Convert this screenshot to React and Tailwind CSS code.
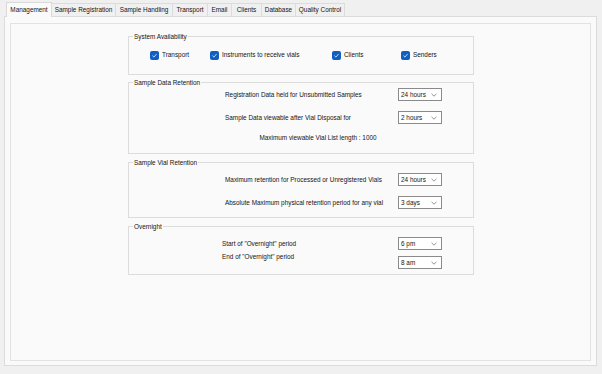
import React from "react";

const tabs = [
  ["Management", 46],
  ["Sample Registration", 64],
  ["Sample Handling", 57],
  ["Transport", 35],
  ["Email", 24],
  ["Clients", 30],
  ["Database", 34],
  ["Quality Control", 49],
];

function Check() {
  return (
    <span className="w-[9px] h-[9px] rounded-[2px] bg-[#0f5fc2] flex items-center justify-center">
      <svg width="7" height="7" viewBox="0 0 10 10">
        <path d="M2 5.2 L4.2 7.3 L8 2.8" fill="none" stroke="#dbe8f8" strokeWidth="1.2" />
      </svg>
    </span>
  );
}

function Select({ value }) {
  return (
    <div className="w-[44px] h-[13px] bg-white border border-[#8a8a8a] flex items-center justify-between pl-[2px] pr-[4px]">
      <span>{value}</span>
      <svg width="6" height="4" viewBox="0 0 6 4">
        <path d="M0.5 0.8 L3 3.2 L5.5 0.8" fill="none" stroke="#7a7a7a" strokeWidth="0.8" />
      </svg>
    </div>
  );
}

function Group({ title, h, mt, children }) {
  return (
    <div className={`relative border border-[#dcdcdc] ${h} ${mt}`}>
      <span className="absolute left-[4px] -top-[5px] bg-[#fafafa] px-[1px] leading-[9px]">{title}</span>
      {children}
    </div>
  );
}

function Row({ label, value, h, indent = "pl-[96px]" }) {
  return (
    <div className={`flex items-center ${h} ${indent}`}>
      <span className="flex-1">{label}</span>
      <div className="w-[75px]">
        <Select value={value} />
      </div>
    </div>
  );
}

export default function App() {
  return (
    <div className="w-[602px] h-[374px] bg-[#f0f0f0] text-[#141414] text-[6.4px] font-['Liberation_Sans',Arial,sans-serif] flex flex-col">
      <div className="flex items-end h-[16px] pl-[6px]">
        {tabs.map(([t, w], i) =>
          i === 0 ? (
            <div
              key={t}
              className="h-[15px] bg-[#fafafa] border border-b-0 border-[#d9d9d9] flex items-center justify-center relative top-[1px]"
              style={{ width: w }}
            >
              {t}
            </div>
          ) : (
            <div
              key={t}
              className="h-[13px] border-r border-t border-[#dcdcdc] flex items-center justify-center"
              style={{ width: w }}
            >
              {t}
            </div>
          )
        )}
      </div>
      <div className="mx-[4px] w-[593px] h-[350px] bg-[#fafafa] border border-[#dcdcdc] pt-[6px] px-[5px]">
        <div className="h-[338px] border border-[#e2e2e2] pl-[117px] pt-[12px]">
          <div className="w-[346px] flex flex-col">
            <Group title="System Availability" h="h-[39px]" mt="mt-0">
              <div className="flex items-center h-[36px] pl-[21px]">
                <Check />
                <span className="ml-[3px] w-[48px]">Transport</span>
                <Check />
                <span className="ml-[3px] w-[110px]">Instruments to receive vials</span>
                <Check />
                <span className="ml-[3px] w-[57px]">Clients</span>
                <Check />
                <span className="ml-[3px]">Senders</span>
              </div>
            </Group>
            <Group title="Sample Data Retention" h="h-[72px]" mt="mt-[7px]">
              <div className="pt-[5px]">
                <Row label="Registration Data held for Unsubmitted Samples" value="24 hours" h="h-[13px]" />
                <div className="h-[10px]" />
                <Row label="Sample Data viewable after Vial Disposal for" value="2 hours" h="h-[13px]" />
                <div className="flex items-center justify-center h-[14px] mt-[7px] pl-[34px]">
                  Maximum viewable Vial List length : 1000
                </div>
              </div>
            </Group>
            <Group title="Sample Vial Retention" h="h-[56px]" mt="mt-[8px]">
              <div className="pt-[10px]">
                <Row label="Maximum retention for Processed or Unregistered Vials" value="24 hours" h="h-[13px]" />
                <div className="h-[10px]" />
                <Row label="Absolute Maximum physical retention period for any vial" value="3 days" h="h-[13px]" />
              </div>
            </Group>
            <Group title="Overnight" h="h-[49px]" mt="mt-[8px]">
              <div className="pt-[10px]">
                <Row label="Start of &quot;Overnight&quot; period" value="6 pm" h="h-[13px]" indent="pl-[93px]" />
                <div className="flex items-start h-[20px] pl-[93px] pt-[6px]">
                  <span className="flex-1 -mt-[4px]">End of "Overnight" period</span>
                  <div className="w-[75px]">
                    <Select value="8 am" />
                  </div>
                </div>
              </div>
            </Group>
          </div>
        </div>
      </div>
    </div>
  );
}
